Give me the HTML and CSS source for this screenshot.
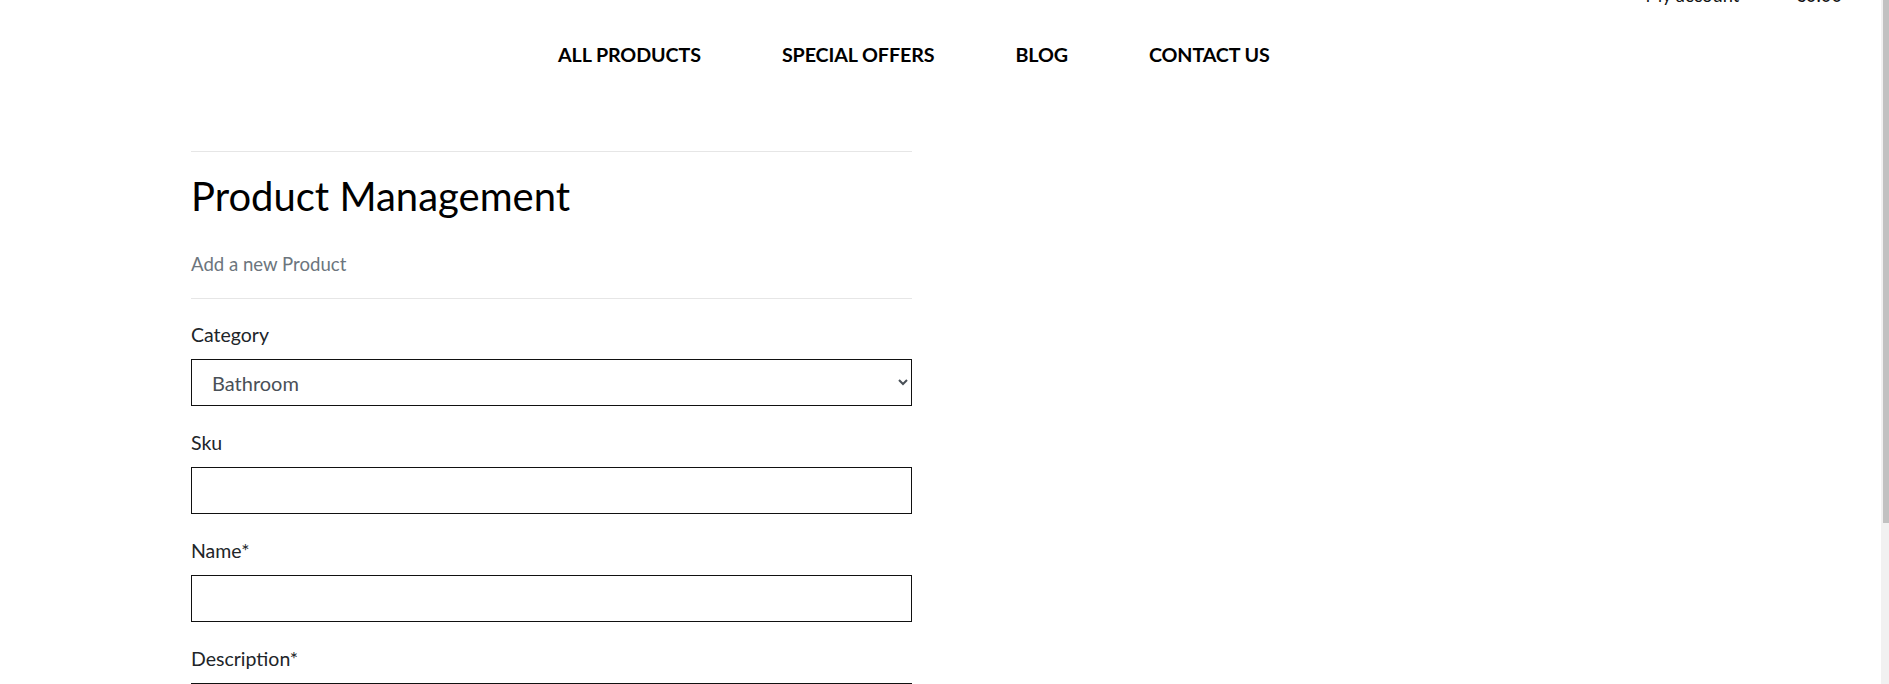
FILE: index.html
```html
<!DOCTYPE html>
<html lang="en">
<head>
<meta charset="utf-8">
<title>Product Management</title>
<link rel="stylesheet" href="styles.css">
</head>
<body>
<div class="window">
  <div class="viewport">
    <header class="site-header">
      <div class="topbar">
        <a class="top-link" href="#">My account</a>
        <a class="top-link" href="#">€0.00</a>
      </div>
      <nav class="main-nav">
        <a href="#">ALL PRODUCTS</a>
        <a href="#">SPECIAL OFFERS</a>
        <a href="#">BLOG</a>
        <a href="#">CONTACT US</a>
      </nav>
    </header>
    <main class="page">
      <section class="panel">
        <hr class="rule">
        <h1 class="title">Product Management</h1>
        <p class="subtitle">Add a new Product</p>
        <hr class="rule rule-bottom">
        <form class="product-form">
          <div class="field">
            <label class="field-label" for="category">Category</label>
            <select class="control select" id="category">
              <option>Bathroom</option>
              <option>Kitchen</option>
              <option>Bedroom</option>
            </select>
          </div>
          <div class="field">
            <label class="field-label" for="sku">Sku</label>
            <input class="control" id="sku" type="text">
          </div>
          <div class="field">
            <label class="field-label" for="name">Name*</label>
            <input class="control" id="name" type="text">
          </div>
          <div class="field">
            <label class="field-label" for="description">Description*</label>
            <textarea class="control textarea" id="description"></textarea>
          </div>
        </form>
      </section>
    </main>
  </div>
  <div class="scrollbar" aria-hidden="true">
    <div class="scroll-thumb"></div>
  </div>
</div>
</body>
</html>
```

FILE: styles.css
```css
html, body {
  margin: 0;
  height: 100%;
  overflow: hidden;
  background: #fff;
}
body {
  font-family: Lato, "Open Sans", sans-serif;
  color: #212529;
}
a {
  color: #111;
  text-decoration: none;
}
.window {
  display: flex;
  height: 100%;
}
.viewport {
  flex: 1;
  min-width: 0;
  overflow: hidden;
}
.scrollbar {
  width: 8px;
  flex: none;
  background: #f1f1f1;
  display: flex;
  justify-content: flex-end;
}
.scroll-thumb {
  width: 6px;
  height: 523px;
  background: #c1c1c1;
}
.topbar {
  display: flex;
  justify-content: flex-end;
  gap: 56px;
  margin-top: -15px;
  height: 20px;
  padding-right: 39px;
  font-size: 18.3px;
  line-height: 20px;
}
.main-nav {
  display: flex;
  gap: 81px;
  padding-top: 38px;
  padding-left: 558px;
  font-size: 19.7px;
  line-height: 24px;
  font-weight: 700;
  letter-spacing: -0.1px;
}
.main-nav a {
  color: #000;
}
.page {
  padding-left: 191px;
  padding-bottom: 40px;
}
.panel {
  width: 721px;
}
.rule {
  border: 0;
  border-top: 1px solid #e6e6e6;
  margin: 84px 0 0;
}
.title {
  margin: 19px 0 0;
  font-size: 40px;
  line-height: 50px;
  font-weight: 400;
  color: #000;
}
.subtitle {
  margin: 30px 0 0;
  font-size: 18.6px;
  line-height: 27px;
  font-weight: 400;
  color: #6c757d;
}
.rule-bottom {
  margin-top: 20px;
}
.product-form {
  padding-top: 22px;
}
.field {
  display: flex;
  flex-direction: column;
  margin-bottom: 23px;
}
.field-label {
  font-size: 19.5px;
  line-height: 27px;
  margin-bottom: 11px;
  color: #212529;
}
.control {
  box-sizing: border-box;
  width: 100%;
  height: 47px;
  border: 1px solid #111;
  border-radius: 0;
  background: #fff;
  padding: 0 20px;
  font-family: Lato, sans-serif;
  font-size: 20px;
  color: #495057;
}
.select {
  padding-left: 16px;
}
.textarea {
  height: 150px;
}
```
